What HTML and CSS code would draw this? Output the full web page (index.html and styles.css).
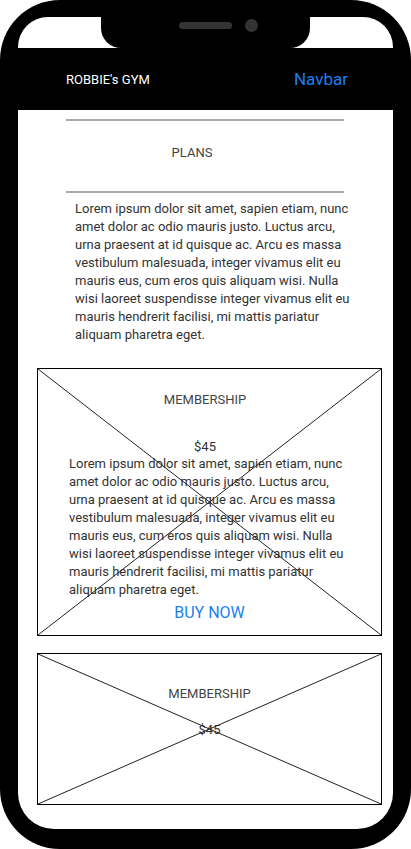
FILE: index.html
```html
<!DOCTYPE html>
<html lang="en">
<head>
<meta charset="utf-8">
<title>Robbie's Gym</title>
<link rel="stylesheet" href="styles.css">
</head>
<body>
<div class="phone">
  <div class="screen">
    <div class="status">
      <div class="notch">
        <span class="speaker"></span>
        <span class="camera"></span>
      </div>
    </div>
    <nav class="navbar">
      <span class="brand">ROBBIE's GYM</span>
      <span class="navlink">Navbar</span>
    </nav>
    <main class="content">
      <section class="plans">
        <h2 class="plans-title">PLANS</h2>
        <p class="text plans-text">Lorem ipsum dolor sit amet, sapien etiam, nunc amet dolor ac odio mauris justo. Luctus arcu, urna praesent at id quisque ac. Arcu es massa vestibulum malesuada, integer vivamus elit eu mauris eus, cum eros quis aliquam wisi. Nulla wisi laoreet suspendisse integer vivamus elit eu mauris hendrerit facilisi, mi mattis pariatur aliquam pharetra eget.</p>
      </section>
      <section class="card card-full">
        <svg class="cross" viewBox="0 0 100 100" preserveAspectRatio="none"><line x1="0" y1="0" x2="100" y2="100"/><line x1="100" y1="0" x2="0" y2="100"/></svg>
        <h3 class="card-title shift">MEMBERSHIP</h3>
        <div class="price shift">$45</div>
        <p class="text">Lorem ipsum dolor sit amet, sapien etiam, nunc amet dolor ac odio mauris justo. Luctus arcu, urna praesent at id quisque ac. Arcu es massa vestibulum malesuada, integer vivamus elit eu mauris eus, cum eros quis aliquam wisi. Nulla wisi laoreet suspendisse integer vivamus elit eu mauris hendrerit facilisi, mi mattis pariatur aliquam pharetra eget.</p>
        <a class="buy">BUY NOW</a>
      </section>
      <section class="card card-short">
        <svg class="cross" viewBox="0 0 100 100" preserveAspectRatio="none"><line x1="0" y1="0" x2="100" y2="100"/><line x1="100" y1="0" x2="0" y2="100"/></svg>
        <h3 class="card-title">MEMBERSHIP</h3>
        <div class="price price-short">$45</div>
      </section>
    </main>
  </div>
</div>
</body>
</html>
```
FILE: styles.css
```css
* { box-sizing: border-box; }
html, body {
  margin: 0;
  padding: 0;
  background: #fff;
}
body {
  font-family: Roboto, "Liberation Sans", Arial, sans-serif;
  color: #333;
}
.phone {
  width: 411px;
  height: 849px;
  background: #000;
  border-radius: 60px;
  padding: 17px 18px 20px 18px;
}
.screen {
  height: 100%;
  background: #fff;
  border-radius: 30px 30px 36px 36px;
  overflow: hidden;
  display: flex;
  flex-direction: column;
}
.status {
  height: 31px;
  display: flex;
  justify-content: center;
  flex: none;
}
.notch {
  width: 209px;
  height: 31px;
  background: #000;
  border-radius: 0 0 20px 20px;
  display: flex;
  align-items: flex-start;
  padding: 5px 0 0 78px;
  gap: 13px;
}
.speaker {
  width: 53px;
  height: 7px;
  border-radius: 4px;
  background: #333;
}
.camera {
  width: 13px;
  height: 13px;
  margin-top: -3px;
  border-radius: 50%;
  background: #333;
}
.navbar {
  height: 62px;
  flex: none;
  background: #000;
  display: flex;
  align-items: center;
  justify-content: space-between;
  padding: 0 45px 0 48px;
}
.brand {
  color: #fff;
  font-size: 13px;
}
.navlink {
  color: #1a7ff0;
  font-size: 17px;
}
.content {
  flex: 1;
  padding-top: 9px;
}
.plans {
  margin: 0;
}
.plans-title {
  margin: 0 49px 0 48px;
  border-top: 2px solid #aaa;
  border-bottom: 2px solid #aaa;
  padding: 23px 26px 29px 0;
  font-size: 13px;
  line-height: 18px;
  font-weight: normal;
  color: #444;
  text-align: center;
}
.text {
  margin: 0;
  font-size: 13px;
  line-height: 18px;
  color: #333;
}
.plans-text {
  margin: 7px 0 0 57px;
  width: 285px;
}
.card {
  position: relative;
  margin: 0 11px 0 19px;
  border: 1px solid #000;
  display: flex;
  flex-direction: column;
  align-items: stretch;
}
.card-full {
  margin-top: 24px;
  padding: 22px 31px 12px;
}
.card-short {
  margin-top: 17px;
  padding: 31px 31px 65px;
}
.cross {
  position: absolute;
  inset: 0;
  width: 100%;
  height: 100%;
  pointer-events: none;
}
.cross line {
  stroke: #222;
  stroke-width: 1;
  vector-effect: non-scaling-stroke;
}
.card-title {
  margin: 0;
  font-size: 13px;
  line-height: 18px;
  font-weight: normal;
  color: #444;
  text-align: center;
}
.shift {
  padding-right: 9px;
}
.price {
  margin-top: 29px;
  font-size: 13px;
  line-height: 17px;
  text-align: center;
  color: #333;
}
.price-short {
  margin-top: 18px;
  line-height: 18px;
}
.buy {
  margin-top: 4px;
  font-size: 16px;
  line-height: 20px;
  color: #1a7ff0;
  text-align: center;
}
```
